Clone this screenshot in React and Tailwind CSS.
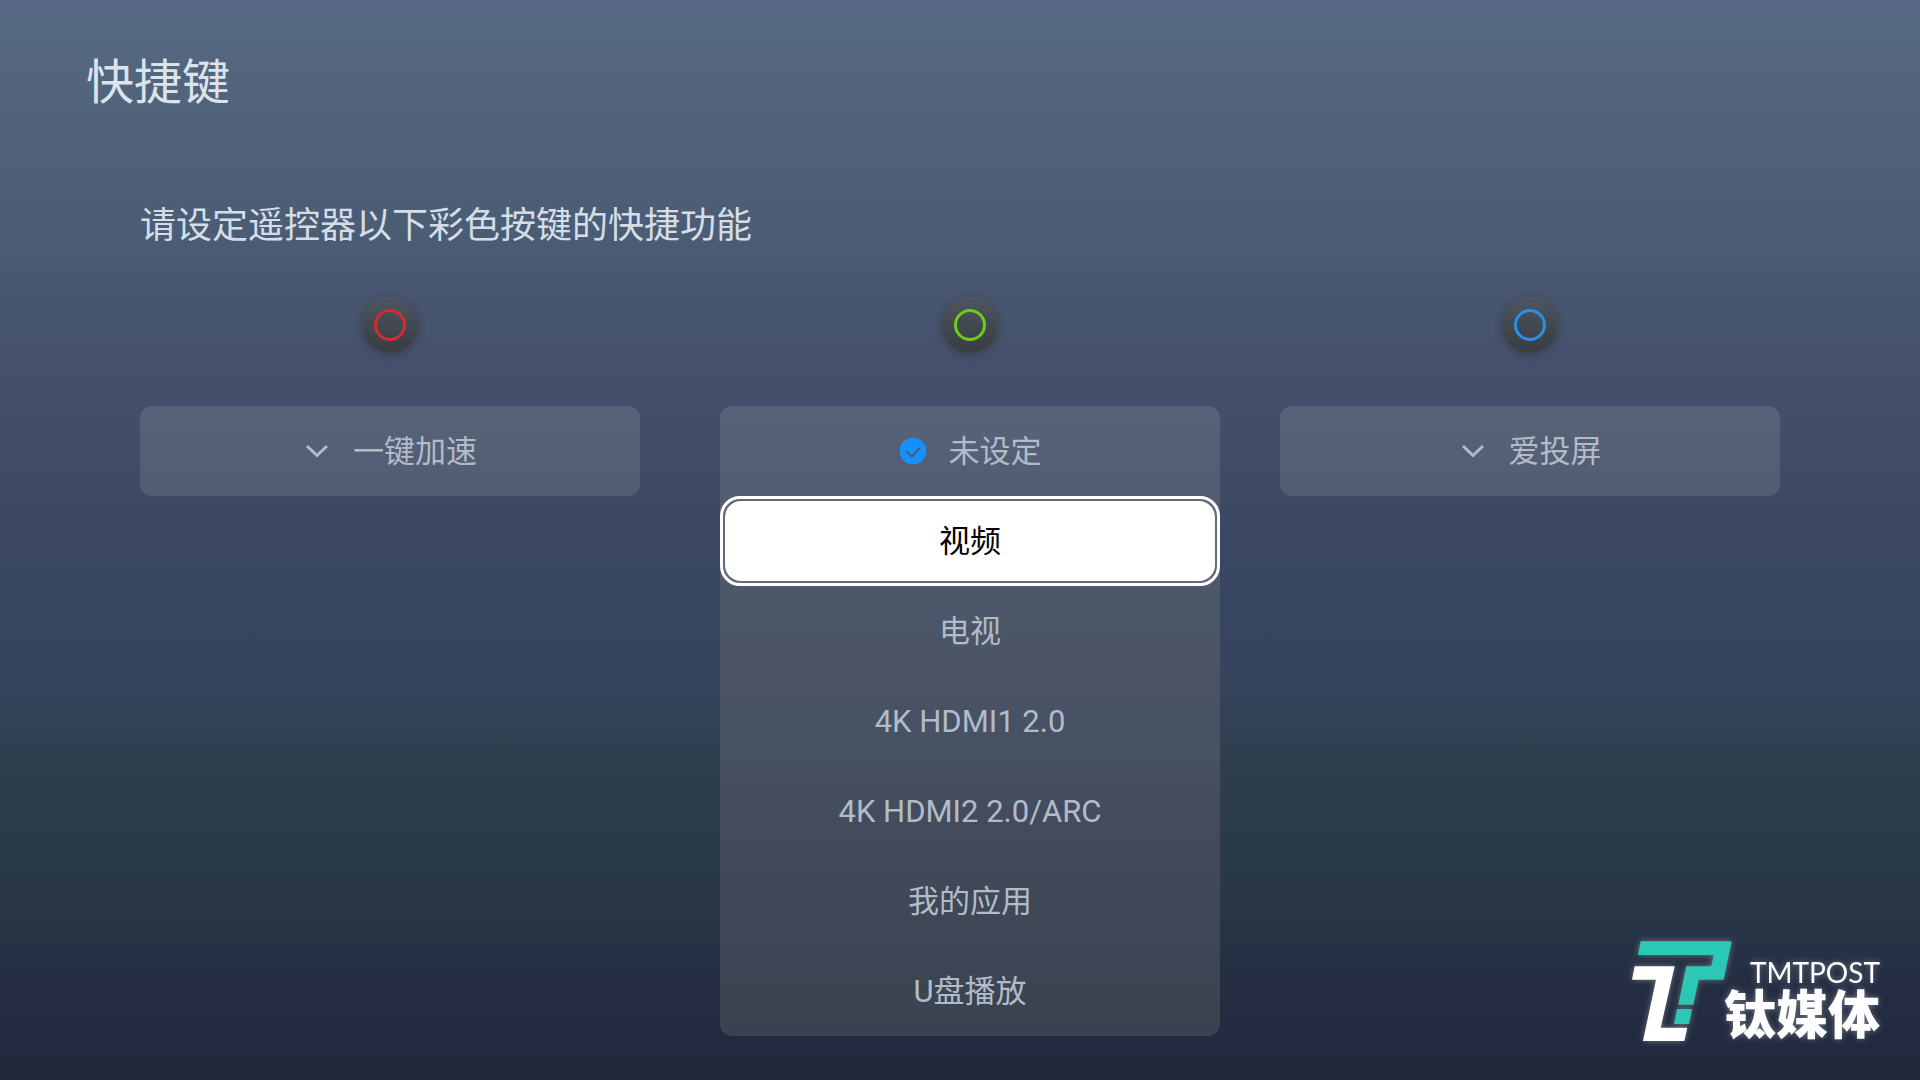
import React from "react";

const ROW =
  "flex h-[90px] w-full items-center justify-center gap-[22px] text-[31px] leading-[45px] text-[#b2bbc8]";

const OPTIONS = ["未设定", "视频", "电视", "4K HDMI1 2.0", "4K HDMI2 2.0/ARC", "我的应用", "U盘播放"];

function Knob({ ring }) {
  return (
    <div className="flex size-14 items-center justify-center rounded-full bg-linear-to-b from-[#50565f] to-[#373c42] shadow-[0_2px_8px_rgba(35,40,52,0.45)]">
      <div className={"size-8 rounded-full border-[3px] " + ring} />
    </div>
  );
}

function Chevron() {
  return (
    <svg className="size-7" viewBox="0 0 28 28" fill="none" stroke="currentColor" strokeWidth="3" aria-hidden="true">
      <path d="M4 9 L14 18.5 L24 9" />
    </svg>
  );
}

function CheckBadge() {
  return (
    <svg className="size-7" viewBox="0 0 28 28" fill="none" aria-hidden="true">
      <circle cx="14" cy="14" r="13.3" fill="#1790ff" />
      <path d="M6.8 14 L12.8 19.4 L21 10.6" stroke="#3a6796" strokeWidth="2.6" />
    </svg>
  );
}

function ShortcutButton({ label }) {
  return (
    <button
      type="button"
      aria-haspopup="listbox"
      className={ROW + " rounded-xl bg-linear-to-b from-[#576379] to-[#525d73]"}
    >
      <Chevron />
      <span>{label}</span>
    </button>
  );
}

function OptionList() {
  return (
    <ul
      role="listbox"
      aria-label="绿色按键"
      className="w-full rounded-xl bg-[linear-gradient(180deg,#576379_0%,#525d73_14%,#4c5869_30%,#4a5366_43%,#465163_55%,#434b5c_68%,#3e4755_84%,#3a4250_100%)]"
    >
      {OPTIONS.map((label, i) => (
        <li key={label} role="presentation">
          {i === 1 ? (
            <button
              type="button"
              role="option"
              aria-selected="false"
              className="flex h-[90px] w-full rounded-[20px] border-[3px] border-white bg-[#626b7b] p-0.5 text-[31px] leading-[45px] text-black outline-none"
            >
              <span className="flex size-full items-center justify-center rounded-2xl bg-white">{label}</span>
            </button>
          ) : (
            <button type="button" role="option" aria-selected={i === 0} className={ROW}>
              {i === 0 && <CheckBadge />}
              <span>{label}</span>
            </button>
          )}
        </li>
      ))}
    </ul>
  );
}

function Brand() {
  return (
    <div className="absolute right-10 bottom-[34px] flex items-end text-white drop-shadow-[0_0_3px_rgba(255,255,255,0.35)]">
      <svg className="-mr-2 mb-0.5 h-[104px] w-[100px]" viewBox="90 60 300 312" aria-hidden="true">
        <path
          fill="#2cc8b6"
          d="M116 64H389L365 179H290L274 254H229L253 139H328L335 105H108ZM225 267H270L261 312H216Z"
        />
        <path fill="#fff" d="M98 139H218L176 323H256L247 363H123L162 179H90Z" />
      </svg>
      <div className="flex flex-col items-end">
        <span className="font-[Lato] text-[28px] leading-8 font-normal">TMTPOST</span>
        <span className="text-[52px] leading-[58px] font-black">钛媒体</span>
      </div>
    </div>
  );
}

export default function App() {
  return (
    <main className="relative min-h-screen overflow-hidden bg-[linear-gradient(180deg,#576984_0%,#53667e_6%,#4a5c74_23%,#48556f_28%,#404b64_43%,#394660_54%,#35435b_64%,#303f50_69%,#2a3949_80%,#263345_87%,#242d42_91%,#20293c_100%)] font-[Roboto,'Noto_Sans_CJK_SC',sans-serif]">
      <h1 className="pt-[59px] pl-[86px] text-[48px] leading-[48px] text-[#dbe3ed]">快捷键</h1>
      <section className="px-[140px] pb-11">
        <h2 className="mt-[101px] text-[36px] leading-[36px] text-[#d5dde8]">请设定遥控器以下彩色按键的快捷功能</h2>
        <div className="mt-[53px] flex items-start">
          <div className="flex flex-1 flex-col items-center gap-[53px]">
            <Knob ring="border-[#d42c32]" />
            <ShortcutButton label="一键加速" />
          </div>
          <div className="ml-20 flex flex-1 flex-col items-center gap-[53px]">
            <Knob ring="border-[#6ccb1c]" />
            <OptionList />
          </div>
          <div className="ml-[60px] flex flex-1 flex-col items-center gap-[53px]">
            <Knob ring="border-[#2a8fe8]" />
            <ShortcutButton label="爱投屏" />
          </div>
        </div>
      </section>
      <Brand />
    </main>
  );
}
